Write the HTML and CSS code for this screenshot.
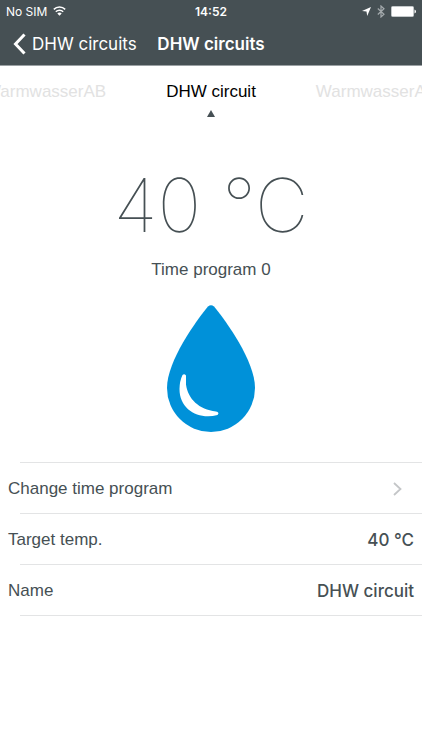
FILE: index.html
```html
<!DOCTYPE html>
<html lang="en">
<head>
<meta charset="utf-8">
<meta name="viewport" content="width=device-width, initial-scale=1">
<title>DHW circuits</title>
<link rel="stylesheet" href="styles.css">
</head>
<body>
<header class="top">
  <div class="status">
    <div class="carrier">
      <span>No SIM</span>
      <svg width="13" height="10" viewBox="0 0 13 10" aria-hidden="true"><g fill="none" stroke="#fff" stroke-width="1.5"><path d="M.8 3.400a8.200 8.200 0 0 1 11.400 0"/><path d="M2.800 5.700a5.300 5.300 0 0 1 7.400 0"/></g><path d="M4.300 7.500a3.200 3.200 0 0 1 4.400 0L6.500 9.700z" fill="#fff"/></svg>
    </div>
    <time class="clock">14:52</time>
    <div class="indicators">
      <svg width="9" height="9" viewBox="0 0 9 9" aria-hidden="true"><path d="M9 0 5.200 9 4.500 4.500 0 4z" fill="#fff"/></svg>
      <svg width="8" height="13" viewBox="0 0 8 13" aria-hidden="true"><path d="M.8 3.500 7 9.300 4 12V1l3 2.700L.8 9.500" fill="none" stroke="#a4aaad" stroke-width="1.200"/></svg>
      <svg width="25" height="11" viewBox="0 0 25 11" aria-hidden="true"><rect x=".5" y=".5" width="22" height="10" rx="1" fill="#fff" stroke="#c3c8ca"/><path d="M23.500 3.500q1.500.5 1.500 2t-1.500 2z" fill="#fff"/></svg>
    </div>
  </div>
  <nav class="nav">
    <a class="back" href="#">
      <svg width="13" height="22" viewBox="0 0 13 22" aria-hidden="true"><path d="M11.500 1.500 2.500 11l9 9.500" fill="none" stroke="#fff" stroke-width="3"/></svg>
      <span>DHW circuits</span>
    </a>
    <h1 class="title">DHW circuits</h1>
  </nav>
</header>
<main>
  <div class="tabs">
    <button class="tab previous" type="button">WarmwasserAB</button>
    <button class="tab current" type="button">DHW circuit</button>
    <button class="tab next" type="button">WarmwasserAB</button>
  </div>
  <svg class="marker" width="8" height="7" viewBox="0 0 8 7" aria-hidden="true"><path d="M4 0 8 7H0z" fill="#465054"/></svg>
  <section class="reading">
    <p class="temperature">40 °C</p>
    <p class="program">Time program 0</p>
    <svg class="drop" width="88" height="127" viewBox="0 0 88 127" aria-hidden="true"><path d="M41 1.500Q44-1 47 1.500C59 16 88 56 88 83a44 44 0 0 1-88 0C0 56 29 16 41 1.500z" fill="#0091d9"/><path d="M15.500 70q1.800-1.500 3.500.5v9C21 94 32 104.500 49 106.500q4 1 1.500 3.500C32 115 12.500 105 12.500 84q.1-8 3-14z" fill="#fff"/></svg>
  </section>
  <div class="rows">
    <a class="row" href="#"><span>Change time program</span><svg class="chevron" width="9" height="14" viewBox="0 0 9 14" aria-hidden="true"><path d="m1 1 6.500 6L1 13" fill="none" stroke="#c4c6c8" stroke-width="1.800"/></svg></a>
    <div class="row"><span>Target temp.</span><span class="value">40 °C</span></div>
    <div class="row"><span>Name</span><span class="value">DHW circuit</span></div>
  </div>
</main>
</body>
</html>
```
FILE: styles.css
```css
* { box-sizing: border-box; }
body {
  margin: 0;
  background: #fff;
  color: #465054;
  font-family: "Liberation Sans", sans-serif;
  font-size: 17px;
  overflow-x: hidden;
}
svg { display: block; flex: none; }
a { color: inherit; text-decoration: none; }
.top {
  background: #465054;
  color: #fff;
  font-family: Inter, sans-serif;
  border-bottom: 1px solid #9ba1a4;
}
.status {
  display: grid;
  grid-template-columns: 1fr auto 1fr;
  align-items: center;
  height: 22px;
  padding: 0 6px;
  font-size: 12px;
}
.carrier, .indicators { display: flex; align-items: center; gap: 6px; }
.indicators { justify-content: flex-end; }
.clock { font-weight: 600; }
.nav {
  display: grid;
  grid-template-columns: 1fr auto 1fr;
  align-items: center;
  height: 43px;
  padding: 0 13px;
  white-space: nowrap;
}
.back { display: flex; align-items: center; gap: 6px; }
.title { margin: 0; font-size: 17px; font-weight: 600; }
.tabs {
  display: grid;
  grid-template-columns: 1fr auto 1fr;
  gap: 60px;
  height: 44px;
  padding-top: 8px;
  overflow: hidden;
}
.tab {
  display: flex;
  align-items: center;
  min-width: 0;
  padding: 0;
  border: 0;
  background: none;
  font: inherit;
  color: #e2e2e2;
  white-space: nowrap;
}
.previous { justify-content: flex-end; }
.next { justify-content: flex-start; }
.current { color: #000; }
.marker { margin: 0 auto; }
.reading {
  display: flex;
  flex-direction: column;
  align-items: center;
  padding: 44px 0 30px;
}
.temperature {
  margin: 0;
  font-family: Inter, sans-serif;
  font-size: 74px;
  font-weight: 100;
  line-height: 88px;
}
.program { margin: 10px 0 24px; line-height: 22px; }
.row {
  display: flex;
  align-items: center;
  justify-content: space-between;
  height: 51px;
  padding: 2px 8px 0;
  background: linear-gradient(#e3e4e5, #e3e4e5) 20px 0 / 100% 1px no-repeat;
}
.row:last-child {
  height: 52px;
  background:
    linear-gradient(#e3e4e5, #e3e4e5) 20px 0 / 100% 1px no-repeat,
    linear-gradient(#e3e4e5, #e3e4e5) 20px 100% / 100% 1px no-repeat;
}
.value { font-family: Inter, sans-serif; font-weight: 500; }
.chevron { margin-right: 12px; }
```
